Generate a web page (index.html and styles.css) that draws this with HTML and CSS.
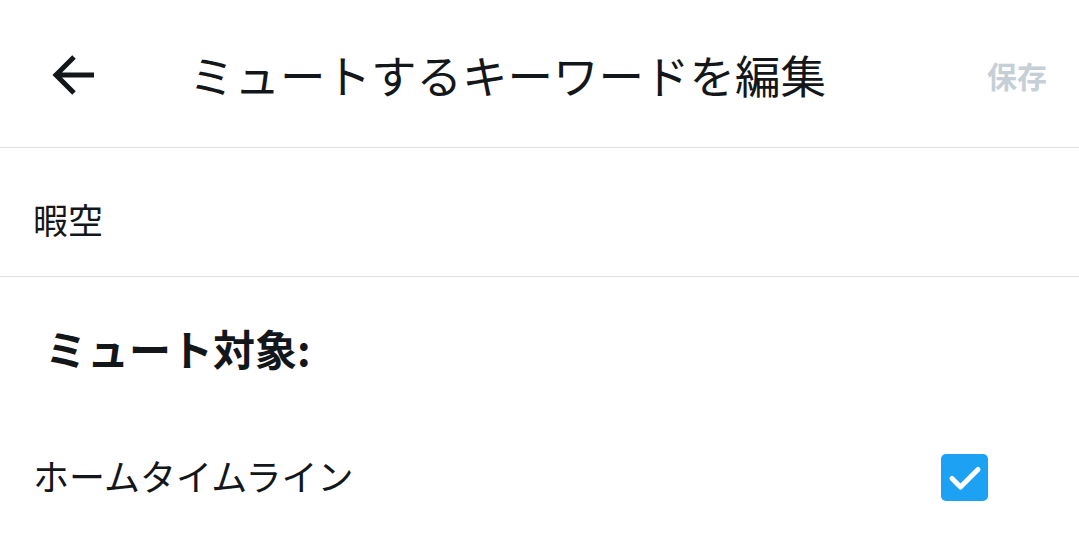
FILE: index.html
```html
<!DOCTYPE html>
<html lang="ja">
<head>
<meta charset="utf-8">
<link rel="stylesheet" href="styles.css">
</head>
<body>
<div class="page">
  <header class="header">
    <div class="back">
      <svg viewBox="0 0 46 46" width="46" height="46"><path d="M44 23H7M24 5L6 23L24 41" fill="none" stroke="#14171a" stroke-width="5" stroke-linecap="butt" stroke-linejoin="miter"/></svg>
    </div>
    <h1 class="title">ミュートするキーワードを編集</h1>
    <div class="save">保存</div>
  </header>
  <div class="keyword">暇空</div>
  <div class="section">ミュート対象:</div>
  <div class="option">
    <span class="option-label">ホームタイムライン</span>
    <span class="checkbox">
      <svg viewBox="0 0 47 47" width="47" height="47"><path d="M11 24.5l8.5 8.5L37 15.5" fill="none" stroke="#fff" stroke-width="5" stroke-linecap="round" stroke-linejoin="round"/></svg>
    </span>
  </div>
</div>
</body>
</html>
```
FILE: styles.css
```css
html, body {
  margin: 0;
  padding: 0;
  background: #ffffff;
}
body {
  font-family: "Noto Sans CJK JP", "Noto Sans", sans-serif;
  color: #14171a;
}
.page {
  width: 1079px;
  height: 554px;
  overflow: hidden;
}
.header {
  height: 147px;
  border-bottom: 1px solid #dde1e4;
  display: flex;
  align-items: center;
  padding: 0 32px 0 50px;
}
.back {
  width: 46px;
  height: 46px;
  display: flex;
  margin-right: 93px;
  margin-top: 3px;
}
.title {
  flex: 1;
  margin: 0;
  font-size: 45.5px;
  font-weight: 400;
  line-height: 1;
  margin-top: 2px;
}
.save {
  font-size: 30px;
  font-weight: 700;
  color: #c6cfd6;
  margin-top: 2px;
}
.keyword {
  height: 129px;
  border-bottom: 1px solid #dde1e4;
  display: flex;
  align-items: center;
  padding-left: 33px;
  padding-top: 12px;
  font-size: 35px;
  box-sizing: border-box;
}
.section {
  height: 140px;
  display: flex;
  align-items: center;
  padding-left: 45px;
  font-size: 42px;
  font-weight: 700;
  box-sizing: border-box;
}
.option {
  height: 120px;
  display: flex;
  align-items: center;
  justify-content: space-between;
  padding: 0 91px 0 33px;
  box-sizing: border-box;
  margin-top: -2px;
}
.option-label {
  font-size: 36px;
}
.checkbox {
  width: 47px;
  height: 47px;
  border-radius: 5px;
  background: #1da1f2;
  display: flex;
  margin-top: 4px;
}
```
